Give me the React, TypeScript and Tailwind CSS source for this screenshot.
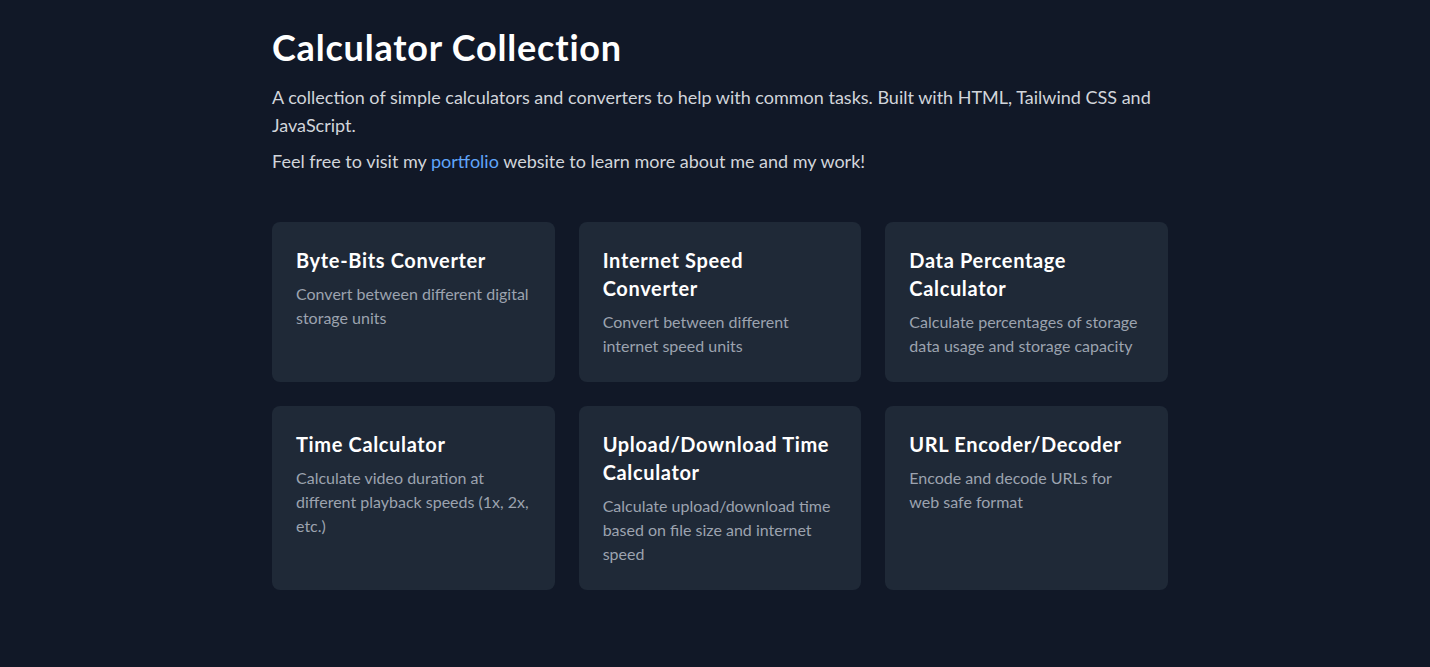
const calculators = [
  {
    title: "Byte-Bits Converter",
    description: "Convert between different digital storage units",
  },
  {
    title: "Internet Speed Converter",
    description: "Convert between different internet speed units",
  },
  {
    title: "Data Percentage Calculator",
    description: "Calculate percentages of storage data usage and storage capacity",
  },
  {
    title: "Time Calculator",
    description: "Calculate video duration at different playback speeds (1x, 2x, etc.)",
  },
  {
    title: "Upload/Download Time Calculator",
    description: "Calculate upload/download time based on file size and internet speed",
  },
  {
    title: "URL Encoder/Decoder",
    description: "Encode and decode URLs for web safe format",
  },
];

function CalculatorCard({ title, description }: { title: string; description: string }) {
  return (
    <a
      href="#"
      className="block rounded-lg bg-[#1f2937] p-6 transition-colors hover:bg-[#273244]"
    >
      <h2 className="text-xl font-bold tracking-[0.65px] text-white">{title}</h2>
      <p className="mt-2 text-base leading-6 text-[#9ca3af]">{description}</p>
    </a>
  );
}

export default function App() {
  return (
    <div className="min-h-screen bg-[#111827] pl-[10px] font-['Lato',sans-serif] text-[#d1d5db]">
      <main className="mx-auto max-w-4xl pt-[27px] pb-12">
        <h1 className="mb-4 text-4xl font-bold tracking-[0.8px] text-white">
          Calculator Collection
        </h1>
        <p className="text-lg leading-7">
          A collection of simple calculators and converters to help with common tasks. Built
          with HTML, Tailwind CSS and JavaScript.
        </p>
        <p className="mt-2 text-lg leading-7">
          Feel free to visit my{" "}
          <a href="#" className="text-[#60a5fa] hover:underline">
            portfolio
          </a>{" "}
          website to learn more about me and my work!
        </p>
        <div className="mt-[47px] grid grid-cols-3 gap-6">
          {calculators.map((c) => (
            <CalculatorCard key={c.title} title={c.title} description={c.description} />
          ))}
        </div>
      </main>
    </div>
  );
}
